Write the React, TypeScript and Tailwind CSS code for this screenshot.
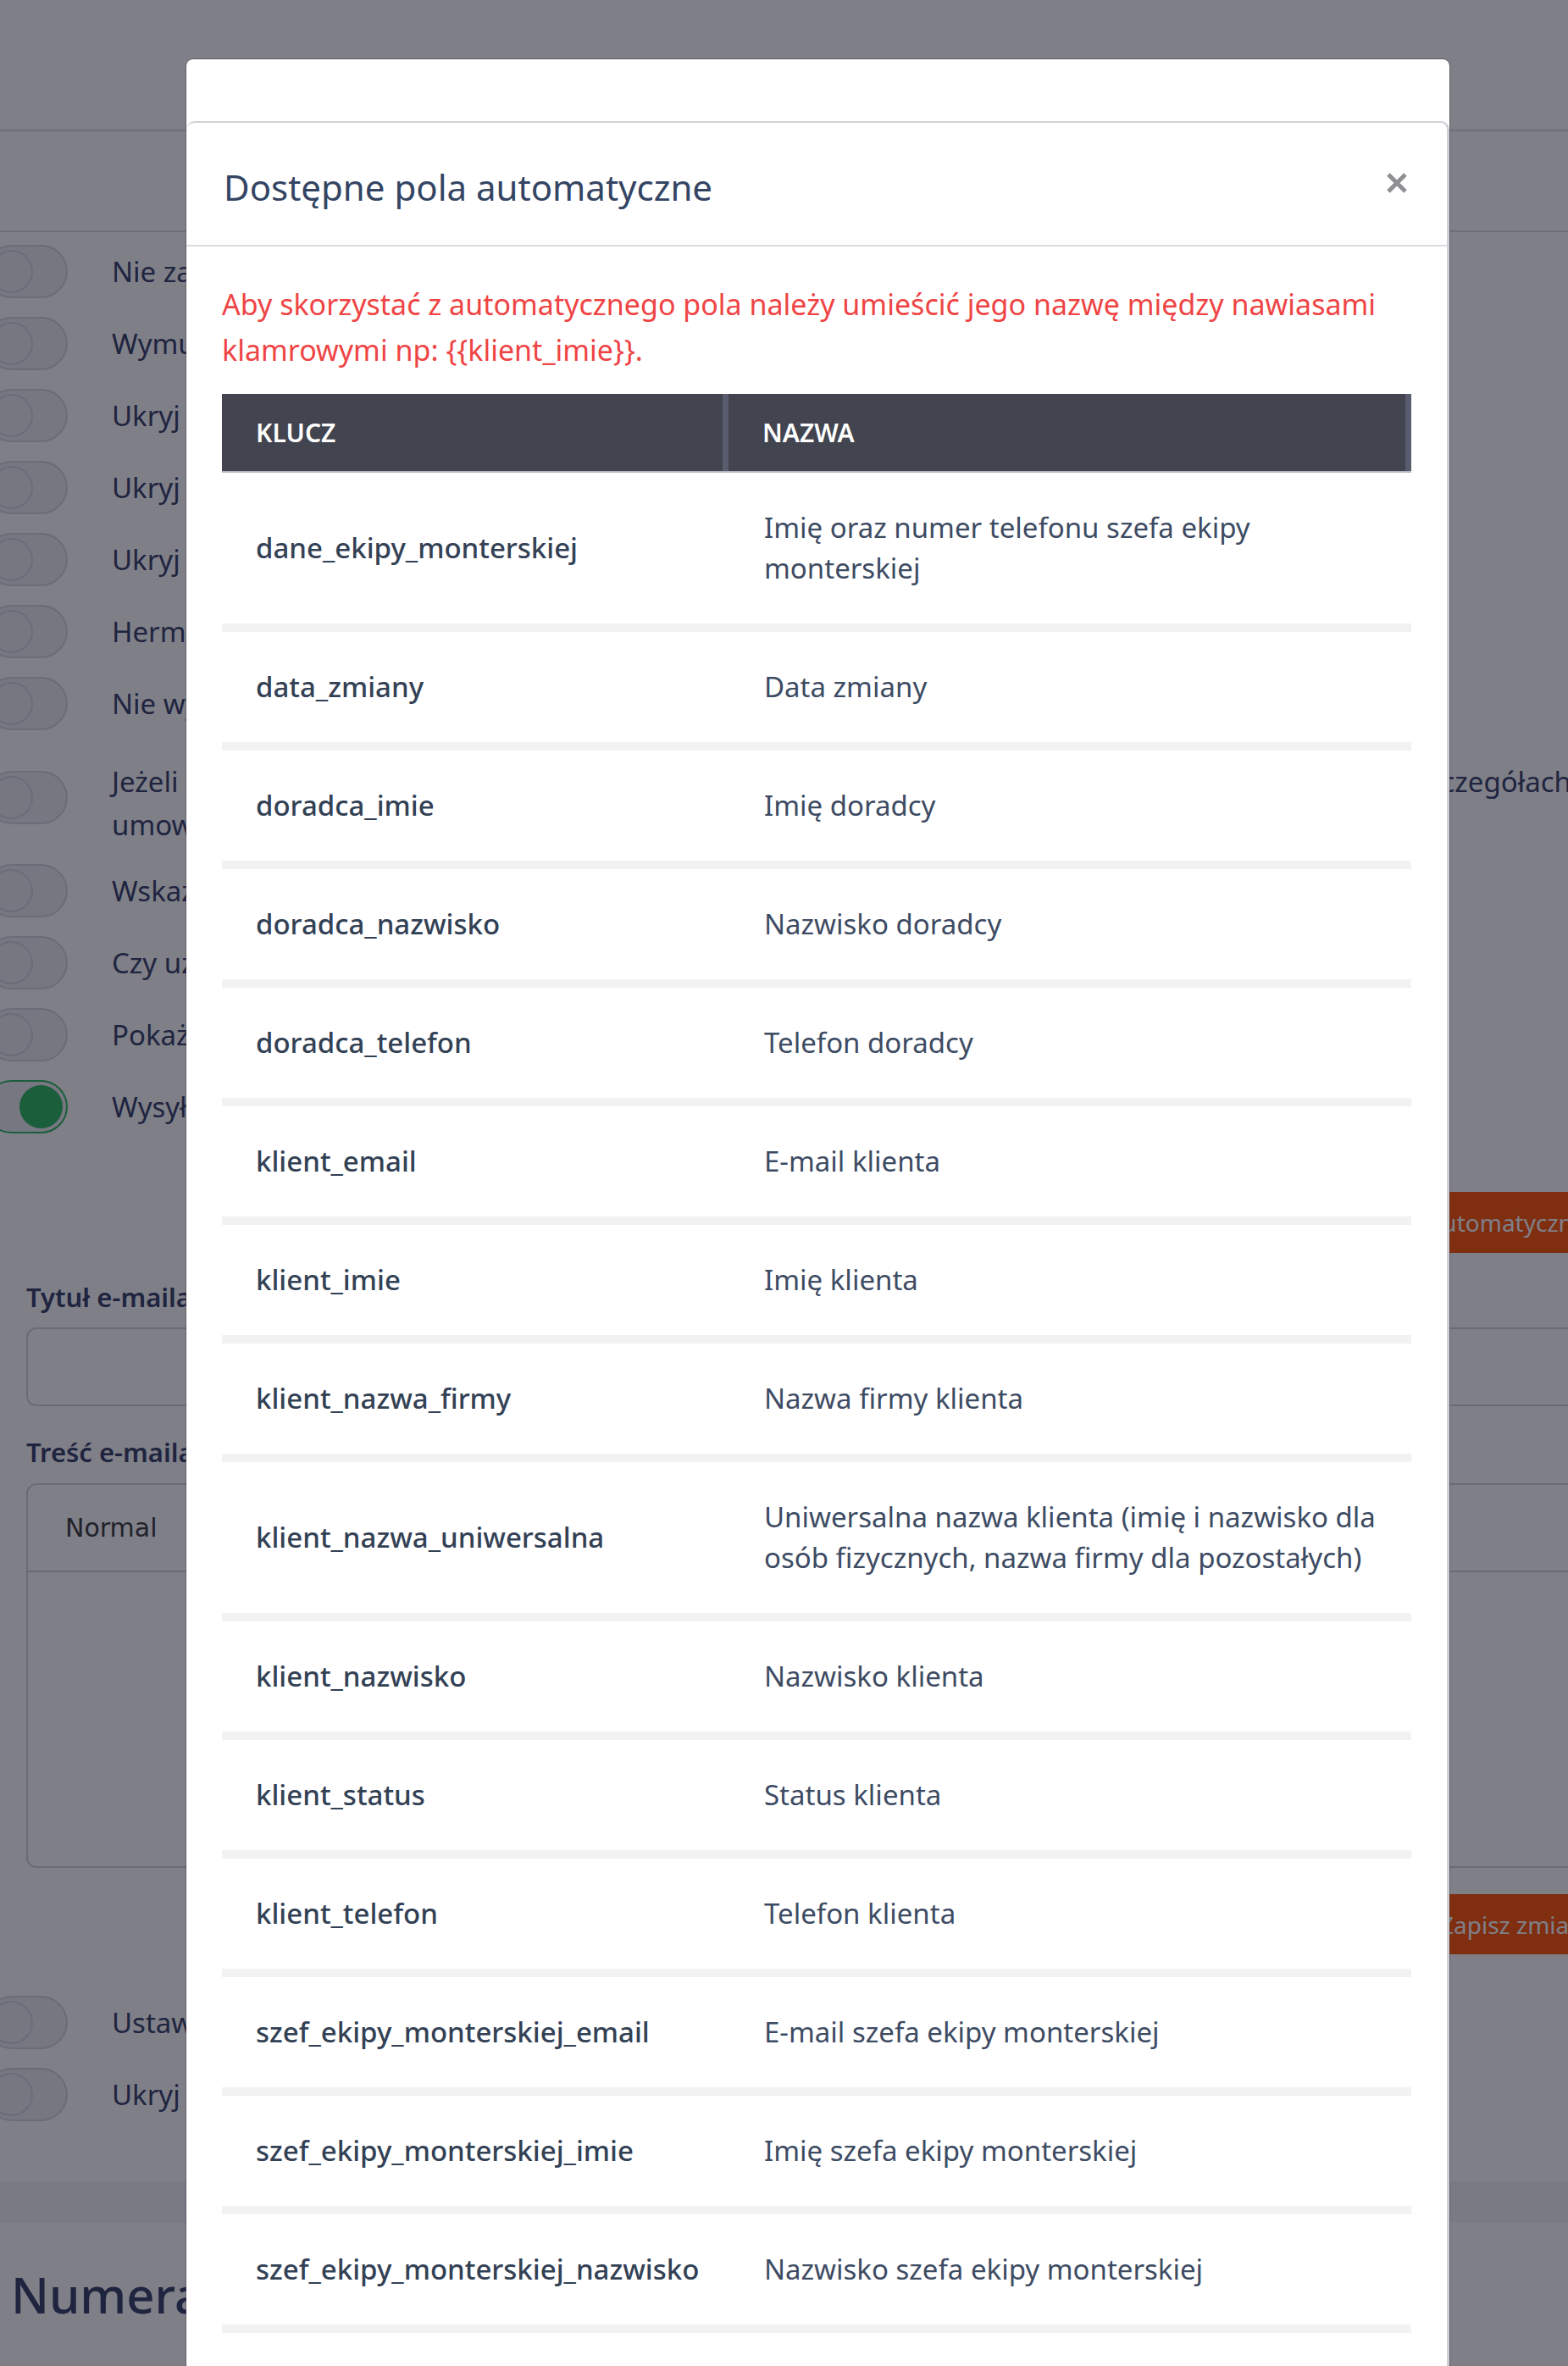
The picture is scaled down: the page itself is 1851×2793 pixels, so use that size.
import React from 'react';

const fields: [string, string][] = [
  ['dane_ekipy_monterskiej', 'Imię oraz numer telefonu szefa ekipy monterskiej'],
  ['data_zmiany', 'Data zmiany'],
  ['doradca_imie', 'Imię doradcy'],
  ['doradca_nazwisko', 'Nazwisko doradcy'],
  ['doradca_telefon', 'Telefon doradcy'],
  ['klient_email', 'E-mail klienta'],
  ['klient_imie', 'Imię klienta'],
  ['klient_nazwa_firmy', 'Nazwa firmy klienta'],
  ['klient_nazwa_uniwersalna', 'Uniwersalna nazwa klienta (imię i nazwisko dla osób fizycznych, nazwa firmy dla pozostałych)'],
  ['klient_nazwisko', 'Nazwisko klienta'],
  ['klient_status', 'Status klienta'],
  ['klient_telefon', 'Telefon klienta'],
  ['szef_ekipy_monterskiej_email', 'E-mail szefa ekipy monterskiej'],
  ['szef_ekipy_monterskiej_imie', 'Imię szefa ekipy monterskiej'],
  ['szef_ekipy_monterskiej_nazwisko', 'Nazwisko szefa ekipy monterskiej'],
];

const settings = [
  'Nie zapisuj historii zmian',
  'Wymuś podpis klienta przy akceptacji',
  'Ukryj ceny w ofercie',
  'Ukryj rabaty w ofercie',
  'Ukryj dane doradcy',
  'Hermetyzacja danych klienta',
  'Nie wysyłaj powiadomień SMS',
];

const settingsAfter = [
  'Wskaż osobę odpowiedzialną',
  'Czy używać automatycznej numeracji',
  'Pokaż historię klienta',
];

function Toggle({ on = false }: { on?: boolean }) {
  return (
    <div
      className={`-ml-[18px] flex h-[63px] w-[98px] shrink-0 items-center rounded-full border-2 bg-[#eeeef2] px-[4px] ${
        on ? 'justify-end border-[#36bc64]' : 'border-[#d8d8e0]'
      }`}
    >
      <div
        className={`h-[51px] w-[51px] rounded-full ${
          on ? 'bg-[#36bc64]' : 'border-2 border-[#d8d8e0] bg-[#eeeef2]'
        }`}
      />
    </div>
  );
}

function SettingRow({ label, on = false }: { label: string; on?: boolean }) {
  return (
    <div className="flex min-h-[85px] items-center gap-[52px]">
      <Toggle on={on} />
      <span className="whitespace-nowrap text-[33px] leading-[51px] text-[#3f486c]">{label}</span>
    </div>
  );
}

export default function App() {
  return (
    <div className="relative h-[2793px] w-full overflow-hidden bg-white font-['Noto_Sans',sans-serif]">
      {/* page behind the modal */}
      <div className="h-[155px] border-b-2 border-[#dbdce3]" />
      <div className="h-[119px] border-b-2 border-[#dbdce3]" />

      <div className="pt-[4px]">
        {settings.map((s) => (
          <SettingRow key={s} label={s} />
        ))}
        <div className="flex min-h-[136px] items-center gap-[52px]">
          <Toggle />
          <div className="pt-[14px] text-[33px] leading-[51px] text-[#3f486c]">
            <div className="flex w-[1723px] justify-between whitespace-nowrap">
              <span>Jeżeli zaznaczone, data podpisania umowy będzie widoczna</span>
              <span>w szczegółach</span>
            </div>
            <div>umowy</div>
          </div>
        </div>
        {settingsAfter.map((s) => (
          <SettingRow key={s} label={s} />
        ))}
        <SettingRow label="Wysyłaj e-mail po zmianie statusu" on />
      </div>

      <div className="mt-[58px] pl-[1458px]">
        <button className="h-[72px] whitespace-nowrap rounded-[6px] bg-[#fe5c0d] px-[30px] text-[28px] text-white">
          Dostępne pola automatyczne
        </button>
      </div>

      <div className="mt-[27px] pl-[31px] text-[31px] font-semibold leading-[51px] text-[#3f486c]">Tytuł e-maila</div>
      <div className="ml-[31px] mt-[10px] h-[93px] w-[2000px] rounded-[12px] border-2 border-[#d4d6de]" />

      <div className="mt-[29px] pl-[31px] text-[31px] font-semibold leading-[51px] text-[#3f486c]">Treść e-maila</div>
      <div className="ml-[31px] mt-[11px] flex h-[454px] w-[2000px] flex-col rounded-[12px] border-2 border-[#d4d6de]">
        <div className="flex h-[103px] items-center border-b-2 border-[#d4d6de] pl-[44px] font-['DejaVu_Sans',sans-serif] text-[30px] text-[#444]">
          Normal
        </div>
      </div>

      <div className="mt-[31px] pl-[1670px]">
        <button className="h-[71px] whitespace-nowrap rounded-[6px] bg-[#fe5c0d] px-[30px] text-[28px] text-white">
          Zapisz zmiany
        </button>
      </div>

      <div className="mt-[38px]">
        <SettingRow label="Ustaw domyślny status" />
        <SettingRow label="Ukryj pole uwagi" />
      </div>

      <div className="mt-[60px] h-[49px] bg-[#f2f4f7]" />
      <div className="mt-[50px] pl-[13px] text-[58px] font-medium leading-[70px] text-[#3f486c]">Numeracja dokumentów</div>

      {/* overlay */}
      <div className="absolute inset-0 bg-[#00001180]" />

      {/* modal */}
      <div className="absolute left-[220px] top-[70px] w-[1491px] rounded-t-[8px] bg-white pt-[73px] shadow-[0_0_0_1px_rgba(40,40,50,0.35)]">
        <div className="rounded-t-[10px] border-r-[3px] border-t-2 border-[#d0d0d6] bg-white">
          <div className="flex items-center justify-between border-b-2 border-[#dadde2] pb-[37px] pl-[44px] pr-[47px] pt-[44px]">
            <h2 className="text-[42px] font-normal leading-[63px] text-[#344563]">Dostępne pola automatyczne</h2>
            <button className="mb-[10px] text-[#8e8e93]">
              <svg width="24" height="24" viewBox="0 0 24 24">
                <path d="M2 2 L22 22 M22 2 L2 22" stroke="currentColor" strokeWidth="5" fill="none" />
              </svg>
            </button>
          </div>

          <div className="px-[42px] pb-[40px] pt-[41px]">
            <p className="text-[34px] leading-[54px] text-[#ef4444]">
              Aby skorzystać z automatycznego pola należy umieścić jego nazwę między nawiasami klamrowymi np:{' '}
              {'{{klient_imie}}'}.
            </p>

            <div className="mt-[25px]">
              <div className="grid h-[93px] grid-cols-[598px_1fr] border-b-2 border-[#b4b6bd] bg-[#42444f]">
                <div className="flex items-center border-r-[7px] border-[#585c6e] pl-[40px] text-[30px] font-semibold uppercase text-white">
                  Klucz
                </div>
                <div className="flex items-center border-r-[7px] border-[#585c6e] pl-[40px] text-[30px] font-semibold uppercase text-white">
                  Nazwa
                </div>
              </div>

              {fields.map(([key, name]) => (
                <div key={key} className="grid grid-cols-[598px_1fr] border-b-[10px] border-[#f2f2f2]">
                  <div className="flex items-center py-[41px] pl-[40px] text-[33px] font-medium leading-[48px] text-[#334155]">
                    {key}
                  </div>
                  <div className="flex items-center py-[41px] pl-[42px] pr-[29px] text-[33px] leading-[48px] text-[#3d4b63]">
                    {name}
                  </div>
                </div>
              ))}
            </div>
          </div>
        </div>
      </div>
    </div>
  );
}
